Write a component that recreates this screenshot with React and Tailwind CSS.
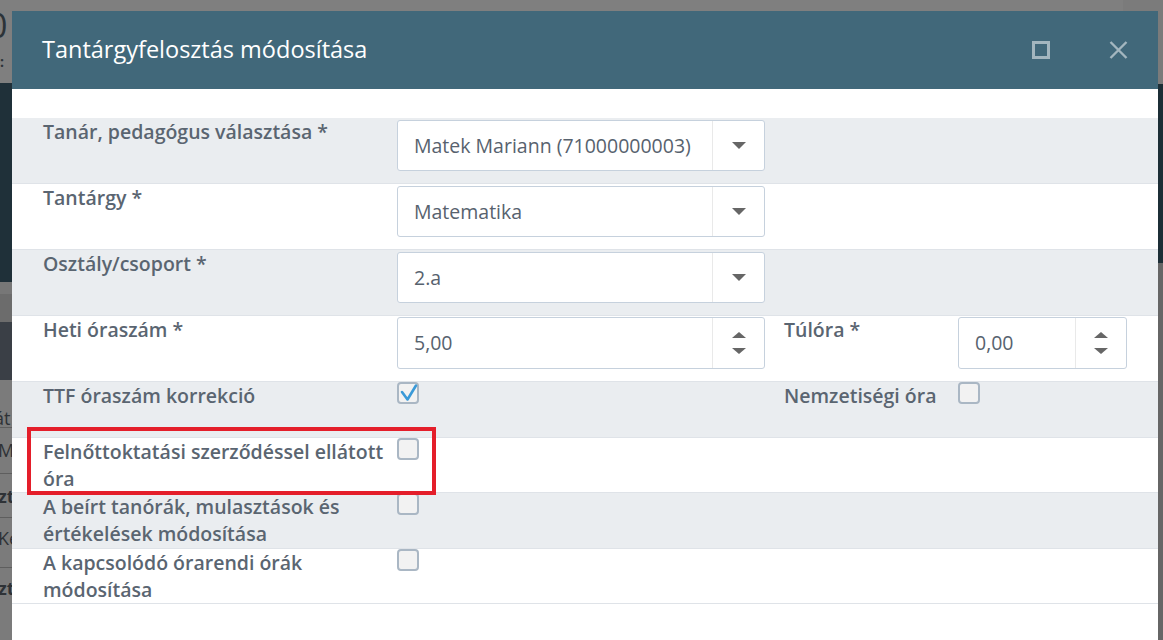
import clsx from 'clsx';

const labelCls = "pr-[8px] text-[19.5px] font-semibold leading-[27px] text-[#5a6571]";

function Row({ gray, tall, extra, children }) {
  return (
    <div
      className={clsx(
        "relative grid grid-cols-[354px_368px_193px_169px] border-b border-[#dfe3e8] pl-[31px]",
        gray ? "bg-[#eaedf0]" : "bg-white",
        tall ? "h-[66px]" : "h-[55.5px]"
      )}
    >
      {children}
      {extra}
    </div>
  );
}

function Caret() {
  return (
    <svg width="14" height="7" viewBox="0 0 14 7">
      <path d="M0 0h14L7 7z" fill="#666" />
    </svg>
  );
}

function SelectBox({ value }) {
  return (
    <div className="mt-[2px] flex h-[51px] rounded-[3px] border border-[#c6d1dd] bg-white">
      <div className="flex flex-1 items-center pl-[16px] text-[19.5px] text-[#57626e]">{value}</div>
      <div className="flex w-[52px] items-center justify-center border-l border-[#e9e9e9]">
        <Caret />
      </div>
    </div>
  );
}

function NumberBox({ value, narrow }) {
  return (
    <div className="mt-[1px] flex h-[52px] rounded-[3px] border border-[#c6d1dd] bg-white">
      <div className="flex flex-1 items-center pl-[16px] text-[19.5px] text-[#57626e]">{value}</div>
      <div
        className={clsx(
          "flex flex-col items-center justify-center gap-[10px] border-l border-[#e9e9e9]",
          narrow ? "w-[51px]" : "w-[52px]"
        )}
      >
        <svg width="14" height="6" viewBox="0 0 14 6">
          <path d="M0 6h14L7 0z" fill="#666" />
        </svg>
        <svg width="14" height="6" viewBox="0 0 14 6">
          <path d="M0 0h14L7 6z" fill="#666" />
        </svg>
      </div>
    </div>
  );
}

function Checkbox({ checked }) {
  return (
    <div className="relative h-[22px] w-[22px] rounded-[4px] border-2 border-[#aab7c4] bg-[#f2f2f2]">
      {checked && (
        <svg className="absolute -left-[2px] -top-[2px]" width="22" height="22" viewBox="0 0 22 22">
          <path d="M5 10 L10.5 17.5 L19 3.5" stroke="#3b9ad8" strokeWidth="2.6" fill="none" strokeLinecap="round" strokeLinejoin="round" />
        </svg>
      )}
    </div>
  );
}

function Backdrop() {
  return (
    <div className="flex h-[640px] w-full">
      <div className="flex flex-1 flex-col">
        <div className="h-[83px] overflow-hidden bg-[#7f7f7f] text-[#2c3338]">
          <div className="-ml-[12px] mt-[8px] text-[34px] leading-[34px]">0</div>
          <div className="-ml-[8px] mt-[12px] text-[14px] font-bold leading-[16px]">0:</div>
        </div>
        <div className="h-[199px] bg-[#1f3039]" />
        <div className="h-[12px] bg-[#777777]" />
        <div className="h-[28px] bg-[#6c6c6c]" />
        <div className="h-[58px] bg-[#3a3f46]" />
        <div className="flex-1 bg-[#7b7b7b] text-[18px] leading-[24px] text-[#2e3236]">
          <div className="-ml-[6px] h-[48px] border-b border-[#5e5e5e] pt-[26px]">át</div>
          <div className="-ml-[2px] h-[46px] border-b border-[#5e5e5e] pt-[10px]">M</div>
          <div className="-ml-[2px] h-[44px] border-b border-[#5e5e5e] pt-[10px] font-bold">zt</div>
          <div className="-ml-[2px] h-[50px] border-b border-[#5e5e5e] pt-[8px]">Ké</div>
          <div className="-ml-[2px] pt-[8px] font-bold">zt</div>
        </div>
      </div>
      <div className="flex w-[40px] flex-col">
        <div className="h-[84px] bg-[#7b7b7b]" />
        <div className="h-[179px] bg-[#1c2e36]" />
        <div className="flex-1 bg-[#666666]" />
      </div>
    </div>
  );
}

export default function App() {
  return (
    <div className="relative h-[640px] w-[1163px] overflow-hidden bg-[#7f7f7f] font-['Open_Sans',sans-serif]">
      <Backdrop />

      {/* dialog */}
      <div className="absolute left-[12px] top-[11px] bottom-0 w-[1146px] bg-white">
        <div className="flex h-[78px] items-center justify-between bg-[#41687a] pl-[30px] pr-[30px]">
          <h1 className="text-[23.5px] font-normal text-white">Tantárgyfelosztás módosítása</h1>
          <div className="flex items-center gap-[59px]">
            <svg width="18" height="18" viewBox="0 0 18 18">
              <rect x="1.5" y="1.5" width="15" height="15" stroke="#a3b6bf" strokeWidth="3" fill="none" />
            </svg>
            <svg width="19" height="18" viewBox="0 0 19 18">
              <path d="M1.5 1 L17.5 17 M17.5 1 L1.5 17" stroke="#a3b6bf" strokeWidth="2.4" />
            </svg>
          </div>
        </div>

        <div className="pt-[29px]">
          <Row gray tall>
            <div className={labelCls}>Tanár, pedagógus választása *</div>
            <SelectBox value="Matek Mariann (71000000003)" />
          </Row>
          <Row tall>
            <div className={labelCls}>Tantárgy *</div>
            <SelectBox value="Matematika" />
          </Row>
          <Row gray tall>
            <div className={labelCls}>Osztály/csoport *</div>
            <SelectBox value="2.a" />
          </Row>
          <Row tall>
            <div className={labelCls}>Heti óraszám *</div>
            <NumberBox value="5,00" />
            <div className={clsx(labelCls, "pl-[19px]")}>Túlóra *</div>
            <NumberBox value="0,00" narrow />
          </Row>
          <Row gray>
            <div className={labelCls}>TTF óraszám korrekció</div>
            <div>
              <Checkbox checked />
            </div>
            <div className={clsx(labelCls, "pl-[19px]")}>Nemzetiségi óra</div>
            <div>
              <Checkbox />
            </div>
          </Row>
          <Row
            extra={
              <div className="pointer-events-none absolute left-[15px] top-[-11px] z-10 h-[68px] w-[409px] border-[4px] border-[#e41e2a]" />
            }
          >
            <div className={labelCls}>Felnőttoktatási szerződéssel ellátott óra</div>
            <div>
              <Checkbox />
            </div>
          </Row>
          <Row gray>
            <div className={labelCls}>A beírt tanórák, mulasztások és értékelések módosítása</div>
            <div>
              <Checkbox />
            </div>
          </Row>
          <Row>
            <div className={labelCls}>A kapcsolódó órarendi órák módosítása</div>
            <div>
              <Checkbox />
            </div>
          </Row>
        </div>
      </div>
    </div>
  );
}
